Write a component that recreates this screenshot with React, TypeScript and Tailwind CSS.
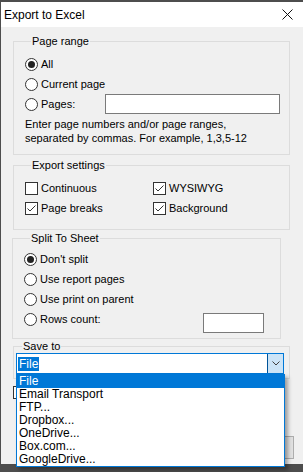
import React from 'react';

const Radio = ({ checked = false }: { checked?: boolean }) => (
  <span className="flex h-[13px] w-[13px] shrink-0 items-center justify-center rounded-full border border-[#333333] bg-white">
    {checked && <span className="h-[7px] w-[7px] rounded-full bg-[#222222]" />}
  </span>
);

const Check = ({ checked = false }: { checked?: boolean }) => (
  <span className="flex h-[13px] w-[13px] shrink-0 items-center justify-center border border-[#333333] bg-white">
    {checked && (
      <svg width="11" height="11" viewBox="0 0 11 11" fill="none">
        <path d="M1.5 5.5 L4 8 L9.5 2.5" stroke="#333333" strokeWidth="1" />
      </svg>
    )}
  </span>
);

const RadioRow = ({ label, checked }: { label: string; checked?: boolean }) => (
  <div className="flex h-[20px] items-center gap-[3px]">
    <Radio checked={checked} />
    <span>{label}</span>
  </div>
);

const CheckRow = ({ label, checked }: { label: string; checked?: boolean }) => (
  <div className="flex h-[20px] items-center gap-[3px]">
    <Check checked={checked} />
    <span>{label}</span>
  </div>
);

const Legend = ({ children }: { children: React.ReactNode }) => (
  <legend className="ml-[6px] px-[1px] leading-[13px]">{children}</legend>
);

const saveTargets = [
  'File',
  'Email Transport',
  'FTP...',
  'Dropbox...',
  'OneDrive...',
  'Box.com...',
  'GoogleDrive...',
];

export default function App() {
  return (
    <div
      className="h-[472px] w-[303px] overflow-hidden bg-[#4d4d4d] text-[11px] text-black"
      style={{ fontFamily: '"Liberation Sans", Arial, sans-serif' }}
    >
      <div className="relative ml-[1px] mt-[2px] h-[462px] bg-[#f0f0f0]">
        {/* title bar */}
        <div className="flex h-[25px] items-center justify-between bg-white pl-[3px] pr-[10px]">
          <span className="text-[12px]">Export to Excel</span>
          <svg width="11" height="11" viewBox="0 0 11 11" fill="none">
            <path d="M0.5 0.5 L10.5 10.5 M10.5 0.5 L0.5 10.5" stroke="#111111" strokeWidth="1" />
          </svg>
        </div>

        {/* page range */}
        <fieldset className="ml-[12px] mt-[8px] w-[277px] border border-[#dcdcdc] pb-[9px] pl-[11px] pt-[6px]">
          <Legend>Page range</Legend>
          <RadioRow label="All" checked />
          <RadioRow label="Current page" />
          <div className="flex h-[20px] items-center">
            <div className="flex w-[80px] items-center gap-[3px]">
              <Radio />
              <span>Pages:</span>
            </div>
            <div className="h-[20px] w-[175px] border border-[#7a7a7a] bg-white" />
          </div>
          <p className="mt-[3px] leading-[14px]">
            Enter page numbers and/or page ranges,
            <br />
            separated by commas. For example, 1,3,5-12
          </p>
        </fieldset>

        {/* export settings */}
        <fieldset className="ml-[12px] mt-[4px] w-[277px] border border-[#dcdcdc] pb-[11px] pl-[11px] pt-[6px]">
          <Legend>Export settings</Legend>
          <div className="grid grid-cols-[128px_1fr]">
            <CheckRow label="Continuous" />
            <CheckRow label="WYSIWYG" checked />
            <CheckRow label="Page breaks" checked />
            <CheckRow label="Background" checked />
          </div>
        </fieldset>

        {/* split to sheet */}
        <fieldset className="ml-[11px] mt-[2px] w-[269px] border border-[#dcdcdc] pb-[5px] pl-[11px] pt-[4px]">
          <Legend>Split To Sheet</Legend>
          <RadioRow label="Don't split" checked />
          <RadioRow label="Use report pages" />
          <RadioRow label="Use print on parent" />
          <div className="flex items-start">
            <div className="flex h-[20px] w-[179px] items-center gap-[3px]">
              <Radio />
              <span>Rows count:</span>
            </div>
            <div className="mt-[4px] h-[20px] w-[61px] border border-[#7a7a7a] bg-white" />
          </div>
        </fieldset>

        {/* save to */}
        <fieldset className="ml-[12px] mt-[1px] w-[277px] border border-[#dcdcdc] pb-[4px] pl-[2px]">
          <Legend>Save to</Legend>
          <div className="flex h-[21px] w-[268px] items-stretch border border-[#0078d7] bg-white">
            <div className="flex flex-1 items-center pl-[1px]">
              <span className="bg-[#0078d7] px-[1px] text-[12px] leading-[14px] text-white">File</span>
            </div>
            <div className="flex w-[16px] items-center justify-center border-l border-[#005499] bg-[#cce4f7]">
              <svg width="8" height="5" viewBox="0 0 8 5" fill="none">
                <path d="M0.5 0.5 L4 4 L7.5 0.5" stroke="#404040" strokeWidth="1" />
              </svg>
            </div>
          </div>
        </fieldset>

        {/* controls mostly covered by the open list */}
        <div className="ml-[12px] mt-[3px] flex h-[20px] items-center">
          <Check />
        </div>
        <div className="mr-[9px] mt-[34px] flex justify-end gap-[6px]">
          <div className="h-[23px] w-[75px] border border-[#adadad] bg-[#e1e1e1]" />
          <div className="h-[23px] w-[75px] border border-[#adadad] bg-[#e1e1e1]" />
        </div>

        {/* dropdown list */}
        <ul className="absolute left-[15px] top-[372px] w-[269px] border border-[#0078d7] bg-white shadow-[3px_3px_4px_rgba(0,0,0,0.35)]">
          {saveTargets.map((t, i) => (
            <li
              key={t}
              className={`h-[13px] pl-[2px] text-[12px] leading-[13px] ${
                i === 0 ? 'bg-[#0078d7] text-white' : 'text-black'
              }`}
            >
              {t}
            </li>
          ))}
        </ul>
      </div>
    </div>
  );
}
